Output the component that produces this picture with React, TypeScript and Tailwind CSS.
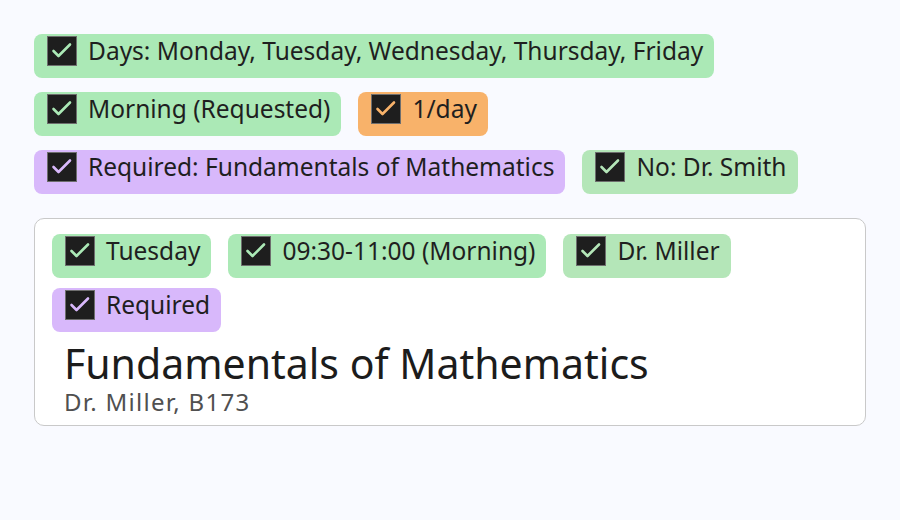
import React from 'react';

type Tone = 'green' | 'pale' | 'orange' | 'purple';

const tones: Record<Tone, { bg: string; check: string }> = {
    green: { bg: 'bg-[#abe9b6]', check: '#abe9b6' },
    pale: { bg: 'bg-[#b4e6b8]', check: '#b4e6b8' },
    orange: { bg: 'bg-[#f8b26a]', check: '#f8b26a' },
    purple: { bg: 'bg-[#d8b8fb]', check: '#d8b8fb' },
};

const Tag: React.FC<{ tone: Tone; label: string }> = ({ tone, label }) => {
    const t = tones[tone];
    return (
        <div className={`inline-flex items-start rounded-[8px] pl-[13px] pr-[11px] pt-[2px] pb-[12px] ${t.bg}`}>
            <span className="block h-[30px] w-[30px] shrink-0 border border-[#6e6e6e] bg-[#1e1e1e]">
                <svg width="28" height="28" viewBox="0 0 28 28" fill="none">
                    <path d="M5.5 14 L10.5 19 L22 7.5" stroke={t.check} strokeWidth="2.6" strokeLinecap="round" strokeLinejoin="round" />
                </svg>
            </span>
            <span className="ml-[11px] text-[24.5px] leading-[30px] text-[#1f1f1f] whitespace-nowrap">{label}</span>
        </div>
    );
};

export default function App() {
    return (
        <div className="min-h-[520px] w-[900px] bg-[#f9faff] px-[34px] pt-[34px]" style={{ fontFamily: '"Noto Sans", sans-serif' }}>
            <div className="flex flex-col gap-[14px]">
                <div className="flex gap-[17px]">
                    <Tag tone="green" label="Days: Monday, Tuesday, Wednesday, Thursday, Friday" />
                </div>
                <div className="flex gap-[17px]">
                    <Tag tone="green" label="Morning (Requested)" />
                    <Tag tone="orange" label="1/day" />
                </div>
                <div className="flex gap-[17px]">
                    <Tag tone="purple" label="Required: Fundamentals of Mathematics" />
                    <Tag tone="pale" label="No: Dr. Smith" />
                </div>
            </div>

            <div className="mt-[24px] w-[832px] rounded-[10px] border border-[#c9c9c9] bg-white px-[17px] pt-[15px] pb-[9px]">
                <div className="flex flex-wrap gap-x-[17px] gap-y-[9px]">
                    <Tag tone="green" label="Tuesday" />
                    <Tag tone="green" label="09:30-11:00 (Morning)" />
                    <Tag tone="pale" label="Dr. Miller" />
                </div>
                <div className="mt-[10px] flex">
                    <Tag tone="purple" label="Required" />
                </div>
                <div className="mt-[8px] flex flex-col gap-[2px] pl-[12px]">
                    <div className="text-[41px] leading-[46px] text-[#1c1c1c] whitespace-nowrap">Fundamentals of Mathematics</div>
                    <div className="text-[24px] leading-[28px] tracking-[1.3px] text-[#505050]">Dr. Miller, B173</div>
                </div>
            </div>
        </div>
    );
}
